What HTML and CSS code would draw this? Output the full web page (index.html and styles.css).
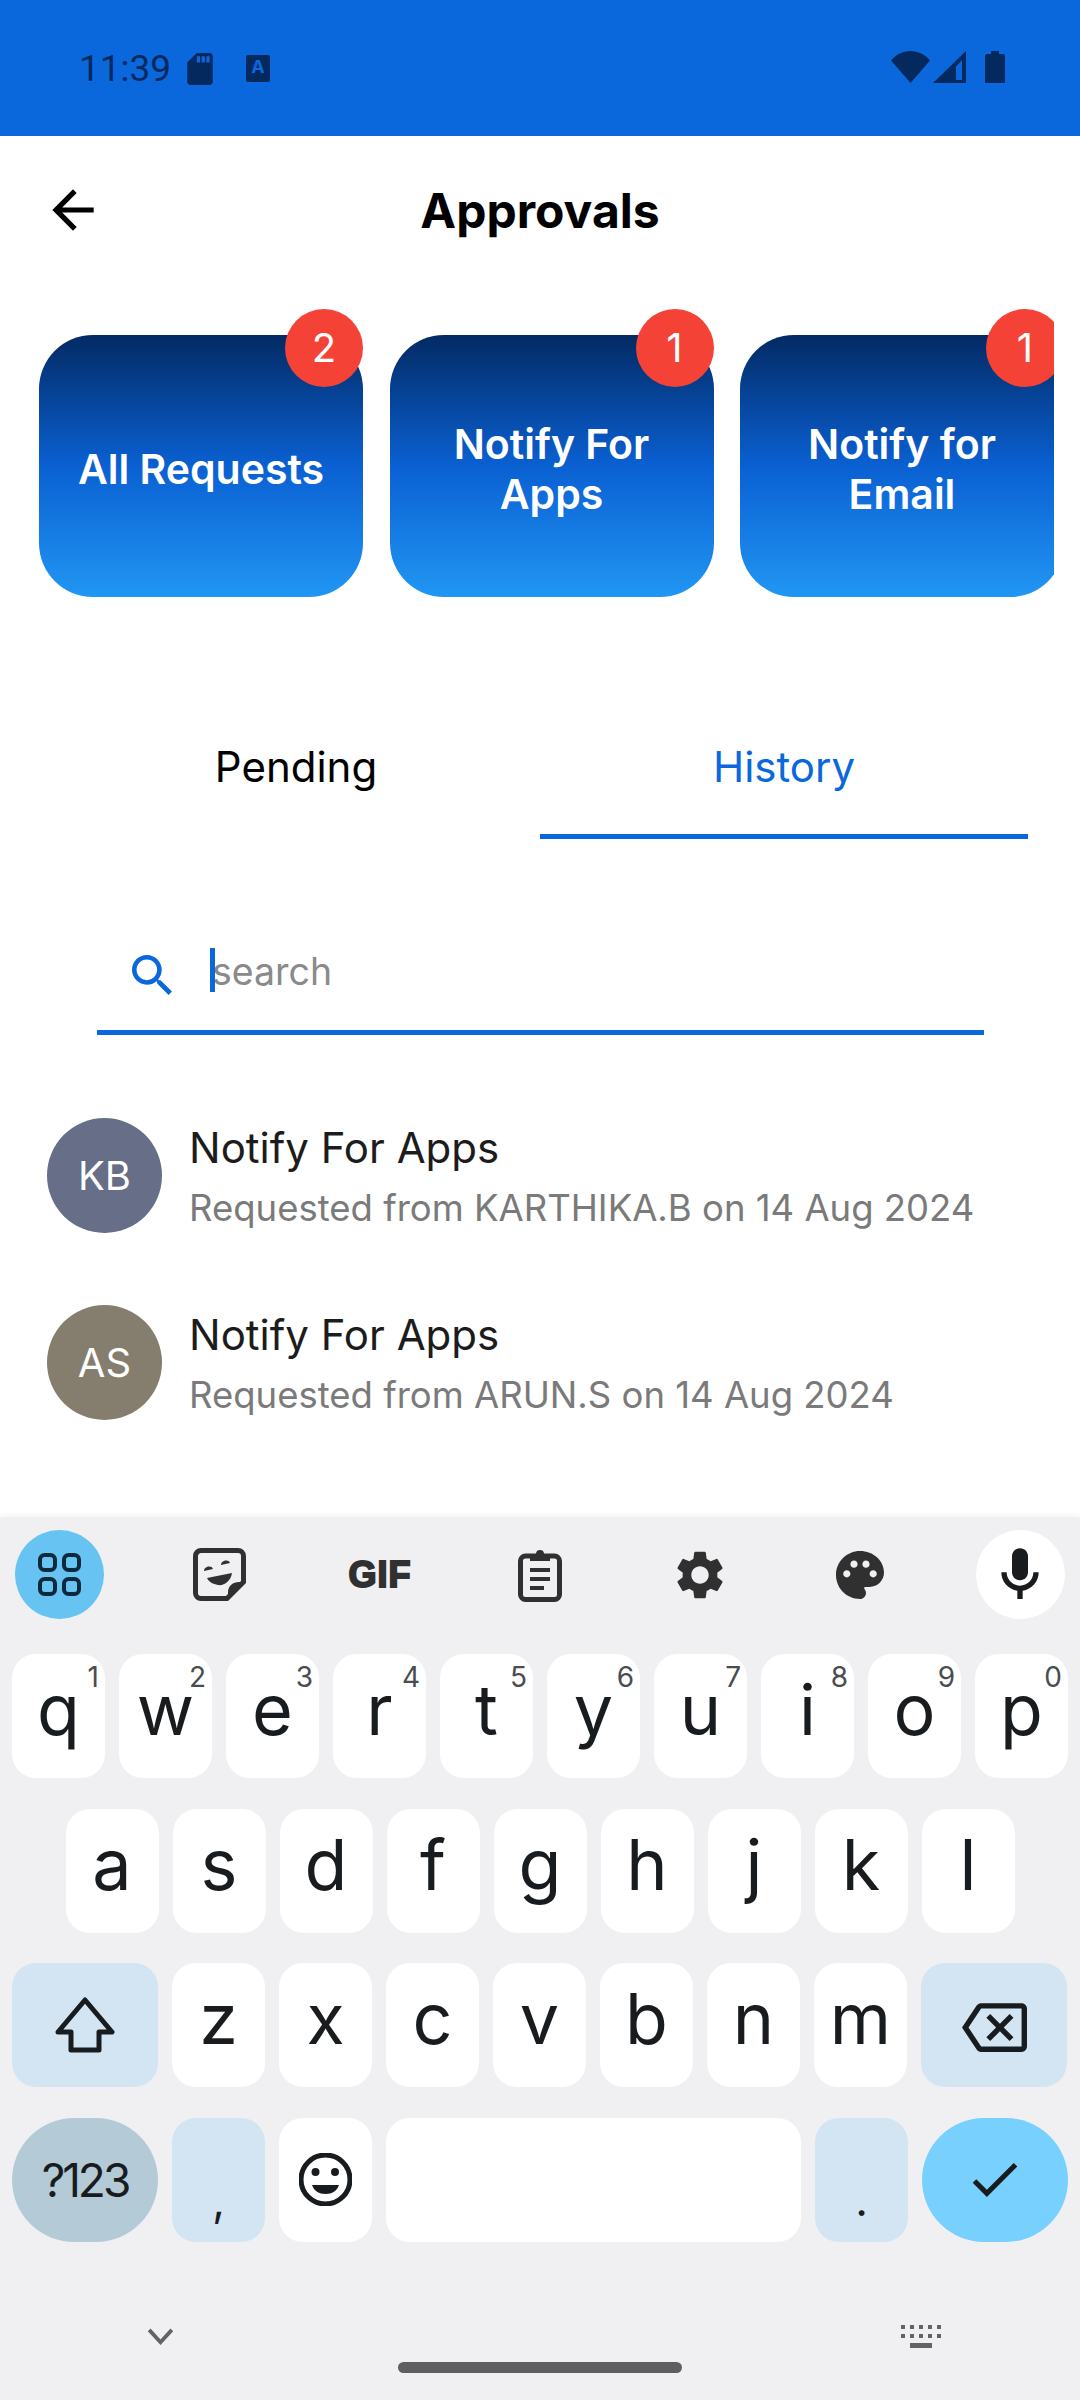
FILE: index.html
```html
<!DOCTYPE html>
<html lang="en">

<head>
    <meta charset="UTF-8">
    <meta name="viewport" content="width=device-width, initial-scale=1.0">
    <title>Approvals</title>
    <link rel="stylesheet" href="styles.css">
</head>

<body>
    <div class="statusbar">
        <div class="status-left">
            <span class="clock">11:39</span>
            <svg class="ic-sd" viewBox="4 2 16 20"><path d="M18 2h-8L4.020 8 4 20c0 1.100.9 2 2 2h12c1.100 0 2-.9 2-2V4c0-1.100-.9-2-2-2zm-6 6h-2V4h2v4zm3 0h-2V4h2v4zm3 0h-2V4h2v4z"/></svg>
            <span class="ic-a">A</span>
        </div>
        <div class="status-right">
            <svg class="ic-wifi" viewBox="0 0 39 32"><path d="M0 9.500C5 3.500 12 0 19.500 0S34 3.500 39 9.500L19.500 32z"/></svg>
            <svg class="ic-signal" viewBox="0 0 33 32"><path fill-rule="evenodd" d="M33 0V32H0zM29 9L23 15.500V29H29z"/></svg>
            <svg class="ic-battery" viewBox="0 0 20 32"><path d="M6 0h8v3h4a2 2 0 0 1 2 2V32H0V5a2 2 0 0 1 2-2h4z"/></svg>
        </div>
    </div>

    <div class="app">
        <header class="topbar">
            <svg class="back" viewBox="0 0 24 24"><path d="M20 11H7.830l5.590-5.590L12 4l-8 8 8 8 1.410-1.410L7.830 13H20v-2z"/></svg>
            <h1>Approvals</h1>
        </header>

        <div class="cards">
            <div class="card"><span class="badge">2</span>All Requests</div>
            <div class="card"><span class="badge">1</span>Notify For<br>Apps</div>
            <div class="card"><span class="badge">1</span>Notify for<br>Email</div>
        </div>

        <div class="tabs">
            <div class="tab">Pending</div>
            <div class="tab active">History</div>
        </div>

        <div class="search">
            <svg class="search-icon" viewBox="3 3 17.500 17.500"><path d="M15.500 14h-.79l-.28-.27C15.410 12.590 16 11.110 16 9.500 16 5.910 13.090 3 9.500 3S3 5.910 3 9.500 5.910 16 9.500 16c1.610 0 3.090-.59 4.230-1.570l.27.28v.79l5 4.990L20.490 19l-4.990-5zm-6 0C7.010 14 5 11.990 5 9.500S7.010 5 9.500 5 14 7.010 14 9.500 11.990 14 9.500 14z"/></svg>
            <div class="search-field"><span class="caret"></span>search</div>
        </div>

        <div class="list">
            <div class="row">
                <div class="avatar kb">KB</div>
                <div class="row-text">
                    <div class="row-title">Notify For Apps</div>
                    <div class="row-sub">Requested from KARTHIKA.B on 14 Aug 2024</div>
                </div>
            </div>
            <div class="row">
                <div class="avatar as">AS</div>
                <div class="row-text">
                    <div class="row-title">Notify For Apps</div>
                    <div class="row-sub">Requested from ARUN.S on 14 Aug 2024</div>
                </div>
            </div>
        </div>
    </div>

    <div class="keyboard">
        <div class="toolbar">
            <div class="tool tool-apps">
                <svg class="ic-grid" viewBox="0 0 43 43"><rect x="2" y="2" width="15" height="15" rx="4.500"/><rect x="26" y="2" width="15" height="15" rx="4.500"/><rect x="2" y="26" width="15" height="15" rx="4.500"/><rect x="26" y="26" width="15" height="15" rx="4.500"/></svg>
            </div>
            <div class="tool">
                <svg class="ic-sticker" viewBox="0 0 53 53"><path class="line" d="M8 2.500H45a5.500 5.500 0 0 1 5.500 5.500V34L34 50.500H8A5.500 5.500 0 0 1 2.500 45V8A5.500 5.500 0 0 1 8 2.500z"/><path d="M52 34L35 52V44C35 38 40 34 46 34z"/><path d="M11 23C11 18 19 17 20 21zM28 17C28 12 36 11 37 15zM14 30L39 25C38 33 31 38 25 37C20 36 16 34 14 30z"/></svg>
            </div>
            <div class="tool">
                <svg class="ic-gif" viewBox="0 0 64 28"><text x="32" y="26" text-anchor="middle">GIF</text></svg>
            </div>
            <div class="tool">
                <svg class="ic-clip" viewBox="0 0 44 54"><rect class="line" x="2.500" y="8" width="39" height="43.500" rx="5"/><path d="M12 6h6a4 4 0 0 1 8 0h6v7H12z"/><path d="M12 20h20v4H12zM12 29h20v4H12zM12 38h14v4H12z"/></svg>
            </div>
            <div class="tool">
                <svg class="ic-gear" viewBox="0 0 24 24"><path d="M19.140 12.940c.04-.3.06-.61.06-.94 0-.32-.02-.64-.07-.94l2.030-1.580c.18-.14.23-.41.12-.61l-1.920-3.320c-.12-.22-.37-.29-.59-.22l-2.390.96c-.5-.38-1.030-.7-1.620-.94l-.36-2.540c-.04-.24-.24-.41-.48-.41h-3.840c-.24 0-.43.17-.47.41l-.36 2.540c-.59.24-1.130.57-1.620.94l-2.390-.96c-.22-.08-.47 0-.59.22L2.740 8.870c-.12.21-.08.47.12.61l2.030 1.580c-.05.3-.09.63-.09.94s.02.64.07.94l-2.030 1.580c-.18.14-.23.41-.12.61l1.920 3.320c.12.22.37.29.59.22l2.390-.96c.5.38 1.030.7 1.620.94l.36 2.540c.05.24.24.41.48.41h3.840c.24 0 .44-.17.47-.41l.36-2.540c.59-.24 1.130-.56 1.620-.94l2.390.96c.22.08.47 0 .59-.22l1.920-3.320c.12-.22.07-.47-.12-.61l-2.010-1.580zM12 15.600c-1.980 0-3.600-1.620-3.600-3.600s1.620-3.600 3.600-3.600 3.600 1.620 3.600 3.600-1.620 3.600-3.600 3.600z"/></svg>
            </div>
            <div class="tool">
                <svg class="ic-palette" viewBox="2 2 20 20"><path d="M12 2C6.490 2 2 6.490 2 12s4.490 10 10 10c1.380 0 2.500-1.120 2.500-2.500 0-.61-.23-1.200-.64-1.670-.08-.1-.13-.21-.13-.33 0-.28.22-.5.5-.5H16c3.310 0 6-2.690 6-6 0-4.960-4.490-9-10-9zm-5.500 11c-.83 0-1.500-.67-1.500-1.500S5.670 10 6.500 10s1.500.67 1.500 1.500S7.330 13 6.500 13zm3-4C8.670 9 8 8.330 8 7.500S8.670 6 9.500 6s1.500.67 1.500 1.500S10.330 9 9.500 9zm5 0c-.83 0-1.500-.67-1.500-1.500S13.670 6 14.500 6s1.500.67 1.500 1.500S15.330 9 14.500 9zm3 4c-.83 0-1.500-.67-1.500-1.500s.67-1.500 1.500-1.500 1.500.67 1.500 1.500-.67 1.500-1.500 1.500z"/></svg>
            </div>
            <div class="tool tool-mic">
                <svg class="ic-mic" viewBox="0 0 24 24"><path d="M12 14c1.660 0 3-1.340 3-3V5c0-1.660-1.340-3-3-3S9 3.340 9 5v6c0 1.660 1.340 3 3 3z"/><path d="M17 11c0 2.760-2.240 5-5 5s-5-2.240-5-5H5c0 3.530 2.610 6.430 6 6.920V21h2v-3.080c3.390-.49 6-3.390 6-6.920h-2z"/></svg>
            </div>
        </div>

        <div class="keys">
            <div class="key-row">
                <div class="key"><i>1</i>q</div>
                <div class="key"><i>2</i>w</div>
                <div class="key"><i>3</i>e</div>
                <div class="key"><i>4</i>r</div>
                <div class="key"><i>5</i>t</div>
                <div class="key"><i>6</i>y</div>
                <div class="key"><i>7</i>u</div>
                <div class="key"><i>8</i>i</div>
                <div class="key"><i>9</i>o</div>
                <div class="key"><i>0</i>p</div>
            </div>
            <div class="key-row center">
                <div class="key">a</div>
                <div class="key">s</div>
                <div class="key">d</div>
                <div class="key">f</div>
                <div class="key">g</div>
                <div class="key">h</div>
                <div class="key">j</div>
                <div class="key">k</div>
                <div class="key">l</div>
            </div>
            <div class="key-row">
                <div class="key wide fn icon">
                    <svg class="ic-shift" viewBox="0 0 60 56"><path d="M30 3L57 35H44V53H16V35H3z"/></svg>
                </div>
                <div class="key">z</div>
                <div class="key">x</div>
                <div class="key">c</div>
                <div class="key">v</div>
                <div class="key">b</div>
                <div class="key">n</div>
                <div class="key">m</div>
                <div class="key wide fn icon">
                    <svg class="ic-del" viewBox="0 3 24 18"><path d="M22 3H7c-.69 0-1.230.35-1.590.88L0 12l5.410 8.110c.36.53.9.89 1.590.89h15c1.100 0 2-.9 2-2V5c0-1.100-.9-2-2-2zm0 16H7.070L2.400 12l4.660-7H22v14zm-11.590-2L14 13.410 17.590 17 19 15.590 15.410 12 19 8.410 17.590 7 14 10.590 10.410 7 9 8.410 12.590 12 9 15.590z"/></svg>
                </div>
            </div>
            <div class="key-row">
                <div class="key wide sym icon">?123</div>
                <div class="key fn punct">,</div>
                <div class="key icon">
                    <svg class="ic-emoji" viewBox="0 0 53 53"><circle class="line" cx="26.500" cy="26.500" r="24.500"/><circle cx="16.500" cy="19" r="4"/><circle cx="36" cy="19" r="4"/><path d="M13 32H40C38 38 33 41 26.500 41S15 38 13 32z"/></svg>
                </div>
                <div class="key space"></div>
                <div class="key fn punct">.</div>
                <div class="key wide done icon">
                    <svg class="ic-check" viewBox="3.400 5.600 17.600 13.400"><path d="M9 16.170L4.830 12l-1.420 1.410L9 19 21 7l-1.410-1.410z"/></svg>
                </div>
            </div>
        </div>

        <div class="kb-nav">
            <svg class="ic-chevron" viewBox="0 0 28 18"><path d="M2 2L14 15L26 2"/></svg>
            <svg class="ic-kbd" viewBox="0 0 40 24"><path d="M0 0h4v4H0zM9 0h4v4H9zM18 0h4v4h-4zM27 0h4v4h-4zM36 0h4v4h-4zM0 9h4v4H0zM9 9h4v4H9zM18 9h4v4h-4zM27 9h4v4h-4zM36 9h4v4h-4zM9 18h22v5H9z"/></svg>
        </div>
        <div class="home-pill"></div>
    </div>
</body>

</html>
```

FILE: styles.css
```css
* {
    box-sizing: border-box;
}

body {
    margin: 0;
    width: 1080px;
    height: 2400px;
    overflow: hidden;
    background-color: #ffffff;
    font-family: Inter, "Noto Sans", sans-serif;
    color: #000000;
}

svg {
    display: block;
    fill: currentColor;
    flex-shrink: 0;
}

/* Status bar */
.statusbar {
    height: 136px;
    background-color: #0a68dc;
    color: #04295f;
    display: flex;
    justify-content: space-between;
    padding: 51px 75px 0 79px;
}

.status-left {
    display: flex;
    align-items: flex-start;
}

.clock {
    font-family: Roboto, sans-serif;
    font-size: 37px;
    line-height: 36px;
    width: 108px;
}

.ic-sd {
    width: 26px;
    height: 32px;
    margin-top: 2px;
}

.ic-a {
    width: 24px;
    height: 27px;
    margin: 4px 0 0 33px;
    background-color: #04295f;
    border-radius: 2px;
    color: #0a68dc;
    font-size: 18px;
    font-weight: 700;
    line-height: 24px;
    text-align: center;
}

.status-right {
    display: flex;
    align-items: flex-start;
}

.ic-wifi {
    width: 39px;
    height: 32px;
}

.ic-signal {
    width: 33px;
    height: 32px;
    margin-left: 3px;
}

.ic-battery {
    width: 20px;
    height: 32px;
    margin-left: 19px;
}

/* App */
.app {
    height: 1381px;
}

.topbar {
    height: 148px;
    display: flex;
    align-items: center;
    justify-content: center;
    position: relative;
}

.back {
    position: absolute;
    left: 42px;
    top: 43px;
    width: 62px;
    height: 62px;
}

h1 {
    margin: 0;
    font-size: 48px;
    font-weight: 700;
}

.cards {
    margin: 25px 26px 0 39px;
    padding-top: 26px;
    display: flex;
    gap: 26.500px;
    overflow: hidden;
}

.card {
    position: relative;
    flex: 0 0 324px;
    height: 262px;
    padding-top: 6px;
    border-radius: 54px;
    background: linear-gradient(180deg, #032a64 0%, #0a60d2 50%, #2196f3 100%);
    color: #ffffff;
    font-size: 41px;
    font-weight: 600;
    line-height: 50px;
    text-align: center;
    display: flex;
    align-items: center;
    justify-content: center;
}

.badge {
    position: absolute;
    top: -26px;
    right: 0;
    width: 78px;
    height: 78px;
    border-radius: 50%;
    background-color: #f44336;
    color: #ffffff;
    font-size: 40px;
    font-weight: 400;
    line-height: 78px;
}

.tabs {
    margin: 99px 52px 0;
    display: flex;
}

.tab {
    flex: 1;
    height: 143px;
    padding-top: 3px;
    display: flex;
    align-items: center;
    justify-content: center;
    font-size: 42px;
    border-bottom: 5px solid transparent;
}

.tab.active {
    color: #0a68dc;
    border-bottom-color: #0a68dc;
}

.search {
    margin: 66px 96px 0 97px;
    height: 130px;
    border-bottom: 5px solid #0a68dc;
    display: flex;
    align-items: center;
    padding-left: 35px;
}

.search-icon {
    width: 40px;
    height: 40px;
    color: #0a68dc;
    margin-top: 14px;
}

.search-field {
    position: relative;
    margin-left: 40px;
    font-size: 37.500px;
    color: #8a8a8a;
    margin-top: 8px;
}

.caret {
    position: absolute;
    left: -2px;
    top: -1px;
    width: 5px;
    height: 44px;
    background-color: #0a68dc;
}

.list {
    margin-top: 83px;
    padding-left: 47px;
    display: flex;
    flex-direction: column;
    gap: 72px;
}

.row {
    display: flex;
    align-items: center;
    gap: 27px;
    height: 115px;
}

.row-text {
    margin-top: 5px;
}

.avatar {
    width: 115px;
    height: 115px;
    border-radius: 50%;
    color: #ffffff;
    font-size: 40px;
    display: flex;
    align-items: center;
    justify-content: center;
    flex-shrink: 0;
}

.avatar.kb {
    background-color: #666e88;
}

.avatar.as {
    background-color: #857e6e;
}

.row-title {
    font-size: 42px;
    color: #1c1c1c;
    line-height: 46px;
}

.row-sub {
    font-size: 36.500px;
    color: #7a7a7a;
    line-height: 46px;
    margin-top: 14px;
}

/* Keyboard */
.keyboard {
    height: 883px;
    background-color: #f0f0f3;
    box-shadow: 0 -2px 6px rgba(0, 0, 0, 0.05);
    padding-top: 13px;
    color: #191c1f;
    position: relative;
}

.toolbar {
    display: flex;
    justify-content: space-between;
    padding: 0 15px;
    color: #303030;
}

.tool {
    width: 89px;
    height: 89px;
    border-radius: 50%;
    display: flex;
    align-items: center;
    justify-content: center;
}

.tool-apps {
    background-color: #66c3f2;
    color: #0d2a3d;
}

.tool-mic {
    background-color: #ffffff;
    color: #191c1f;
}

.ic-grid {
    width: 43px;
    height: 43px;
    fill: none;
    stroke: currentColor;
    stroke-width: 4;
}

.line {
    fill: none;
    stroke: currentColor;
    stroke-width: 5;
}

.ic-sticker {
    width: 53px;
    height: 53px;
}

.ic-gif {
    width: 64px;
    height: 28px;
    overflow: visible;
}

.ic-gif text {
    font-family: "Liberation Sans", sans-serif;
    font-size: 36px;
    font-weight: 700;
    letter-spacing: 1px;
    stroke: currentColor;
    stroke-width: 2;
    stroke-linejoin: miter;
}

.ic-clip {
    width: 44px;
    height: 54px;
}

.ic-gear {
    width: 58px;
    height: 58px;
}

.ic-palette {
    width: 48px;
    height: 48px;
}

.ic-mic {
    width: 64px;
    height: 64px;
}

.keys {
    margin-top: 35px;
    padding: 0 12px;
    display: flex;
    flex-direction: column;
    gap: 30.500px;
}

.key-row {
    display: flex;
    gap: 14px;
}

.key-row.center {
    justify-content: center;
}

.key {
    position: relative;
    flex: 0 0 93px;
    height: 124px;
    border-radius: 24px;
    background-color: #ffffff;
    font-size: 70px;
    line-height: 40px;
    display: flex;
    align-items: center;
    justify-content: center;
    padding-bottom: 12px;
}

.key i {
    position: absolute;
    top: 11px;
    right: 6px;
    font-style: normal;
    font-size: 28px;
    color: #4a4c4f;
    line-height: 24px;
}

.key.icon {
    padding: 0;
}

.key.wide {
    flex-basis: 146px;
}

.key.space {
    flex: 1;
}

.key.fn {
    background-color: #d3e4f3;
}

.key.sym {
    background-color: #b4cad7;
    border-radius: 62px;
    font-size: 46px;
    letter-spacing: -3px;
}

.key.done {
    background-color: #78d0ff;
    border-radius: 62px;
}

.key.punct {
    font-size: 44px;
    padding: 40px 0 0;
}

.ic-shift {
    width: 60px;
    height: 56px;
    fill: none;
    stroke: currentColor;
    stroke-width: 5;
    stroke-linejoin: round;
}

.ic-del {
    width: 65px;
    height: 53px;
    margin-top: 4px;
}

.ic-emoji {
    width: 53px;
    height: 53px;
}

.ic-check {
    width: 46px;
    height: 34px;
}

.kb-nav {
    display: flex;
    justify-content: space-between;
    align-items: center;
    height: 40px;
    margin-top: 75px;
    padding: 0 139px 0 147px;
    color: #636363;
}

.ic-chevron {
    width: 27px;
    height: 17px;
    fill: none;
    stroke: currentColor;
    stroke-width: 4;
}

.ic-kbd {
    width: 40px;
    height: 24px;
}

.home-pill {
    width: 284px;
    height: 11px;
    margin: 5px auto 0;
    border-radius: 6px;
    background-color: #5f5f5f;
}
```
